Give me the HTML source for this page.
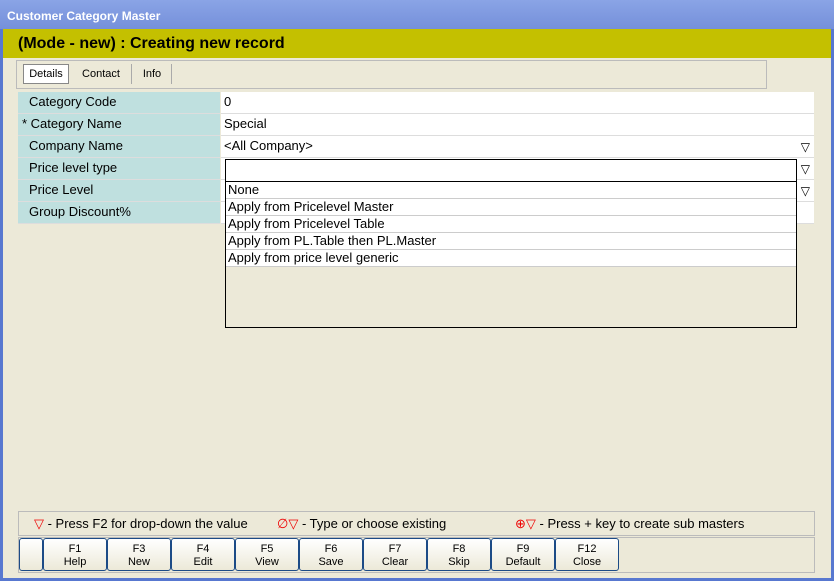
<!DOCTYPE html><html><head><style>
body{margin:0;width:834px;height:581px;overflow:hidden;font-family:"Liberation Sans",sans-serif;font-size:13px;}
.win{position:absolute;left:0;top:0;width:828px;height:578px;background:#ece9d8;border:3px solid #5878d0;border-top:none;}
.title{position:absolute;left:0;top:0;width:834px;height:29px;background:linear-gradient(#8aa4e6,#7590da);color:#fff;font-weight:bold;font-size:12px;}
.title span{position:absolute;left:7px;top:9px;}
.mode{position:absolute;left:3px;top:29px;width:828px;height:29px;background:#c4c000;font-size:16px;font-weight:bold;}
.mode span{position:absolute;left:15px;top:6px;}
.tabs{position:absolute;left:16px;top:60px;width:749px;height:27px;border:1px solid #bbb;}
.tab{position:absolute;top:3px;height:20px;line-height:20px;font-size:11px;border-right:1px solid #aaa;}
.a{position:absolute;}
.lab{position:absolute;left:18px;width:202px;height:21px;background:#bfe0df;border-bottom:1px solid #ddd;line-height:20px;text-indent:11px;}
.val{position:absolute;left:221px;width:593px;height:21px;background:#fff;border-bottom:1px solid #ddd;line-height:20px;text-indent:3px;}
.arr{position:absolute;right:4px;top:1px;font-size:12px;}
.dd{position:absolute;left:225px;top:159px;width:570px;height:167px;border:1px solid #000;background:#ece9d8;}
.it{position:absolute;left:0;width:570px;height:16px;background:#fff;border-bottom:1px solid #ccc;line-height:16px;text-indent:2px;}
.leg{position:absolute;left:18px;top:511px;width:795px;height:23px;border:1px solid #bbb;}
.btns{position:absolute;left:18px;top:537px;width:795px;height:34px;border:1px solid #bbb;}
.b{position:absolute;top:0;width:63px;height:33px;background:linear-gradient(#fff,#ece9d8);border:1px solid #1c4b86;border-radius:3px;text-align:center;font-size:11px;line-height:13px;box-sizing:border-box;padding-top:4px;}
.r{color:#e00;}
</style></head><body>
<div class="win"></div>
<div class="title"><span>Customer Category Master</span></div>
<div class="mode"><span>(Mode - new) : Creating new record</span></div>
<div class="tabs">
<div class="tab" style="left:6px;width:44px;border:1px solid #888;background:#fff;text-align:center;height:18px;line-height:18px">Details</div>
<div class="tab" style="left:54px;width:60px;text-align:center">Contact</div>
<div class="tab" style="left:116px;width:38px;text-align:center">Info</div>
</div>
<div class="lab" style="top:92px">Category Code</div><div class="val" style="top:92px">0</div>
<div class="lab" style="top:114px;text-indent:4px">* Category Name</div><div class="val" style="top:114px">Special</div>
<div class="lab" style="top:136px">Company Name</div><div class="val" style="top:136px">&lt;All Company&gt;<span class="arr">▽</span></div>
<div class="lab" style="top:158px">Price level type</div><div class="val" style="top:158px"><span class="arr">▽</span></div>
<div class="lab" style="top:180px">Price Level</div><div class="val" style="top:180px"><span class="arr">▽</span></div>
<div class="lab" style="top:202px">Group Discount%</div><div class="val" style="top:202px"></div>
<div class="dd">
<div class="it" style="top:0;height:21px;border-bottom:1px solid #000"></div>
<div class="it" style="top:22px">None</div>
<div class="it" style="top:39px">Apply from Pricelevel Master</div>
<div class="it" style="top:56px">Apply from Pricelevel Table</div>
<div class="it" style="top:73px">Apply from PL.Table then PL.Master</div>
<div class="it" style="top:90px">Apply from price level generic</div>
</div>
<div class="leg">
<span class="a" style="left:15px;top:4px"><span class="r">▽</span> - Press F2 for drop-down the value</span>
<span class="a" style="left:258px;top:4px"><span class="r">∅▽</span> - Type or choose existing</span>
<span class="a" style="left:496px;top:4px"><span class="r">⊕▽</span> - Press + key to create sub masters</span>
</div>
<div class="btns">
<div class="b" style="left:0;width:24px"></div>
<div class="b" style="left:24px;width:64px">F1<br>Help</div>
<div class="b" style="left:88px;width:64px">F3<br>New</div>
<div class="b" style="left:152px;width:64px">F4<br>Edit</div>
<div class="b" style="left:216px;width:64px">F5<br>View</div>
<div class="b" style="left:280px;width:64px">F6<br>Save</div>
<div class="b" style="left:344px;width:64px">F7<br>Clear</div>
<div class="b" style="left:408px;width:64px">F8<br>Skip</div>
<div class="b" style="left:472px;width:64px">F9<br>Default</div>
<div class="b" style="left:536px;width:64px">F12<br>Close</div>
</div>
</body></html>
